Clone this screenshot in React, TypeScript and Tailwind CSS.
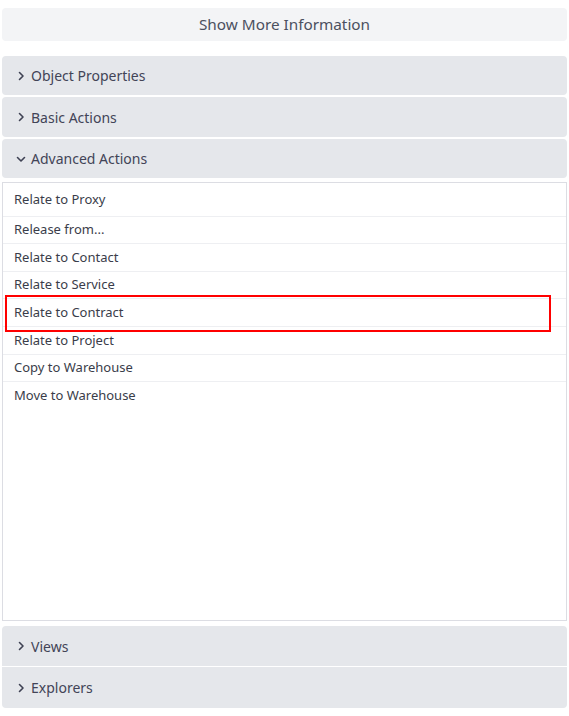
import React from "react";

const Chevron = ({ open }: { open?: boolean }) =>
  open ? (
    <svg width="12" height="12" viewBox="0 0 12 12" className="shrink-0">
      <path d="M2.5 4.5 L6 8 L9.5 4.5" fill="none" stroke="#3f4254" strokeWidth="1.6" strokeLinecap="round" strokeLinejoin="round" />
    </svg>
  ) : (
    <svg width="12" height="12" viewBox="0 0 12 12" className="shrink-0">
      <path d="M4.5 2.5 L8 6 L4.5 9.5" fill="none" stroke="#3f4254" strokeWidth="1.6" strokeLinecap="round" strokeLinejoin="round" />
    </svg>
  );

const Header = ({ label, open, className }: { label: string; open?: boolean; className: string }) => (
  <div className={`flex items-center gap-[4px] pl-[13px] bg-[#e5e7eb] text-[14px] text-[#424457] ${className}`}>
    <Chevron open={open} />
    <span>{label}</span>
  </div>
);

const items: [string, string, boolean][] = [
  ["Relate to Proxy", "h-[34px]", true],
  ["Release from...", "h-[27px]", true],
  ["Relate to Contact", "h-[28px]", true],
  ["Relate to Service", "h-[27px]", true],
  ["Relate to Contract", "h-[28px]", true],
  ["Relate to Project", "h-[28px]", true],
  ["Copy to Warehouse", "h-[27px]", true],
  ["Move to Warehouse", "h-[27px]", false],
];

export default function App() {
  return (
    <div className="w-[569px] h-[716px] bg-white px-[2px] pt-[8px]" style={{ fontFamily: '"Noto Sans", "Open Sans", sans-serif' }}>
      <div className="h-[33px] rounded-[4px] bg-[#f3f4f6] flex items-center justify-center text-[15.3px] text-[#4b5060]">
        Show More Information
      </div>
      <div className="mt-[15px] flex flex-col">
        <Header label="Object Properties" className="h-[39px] rounded-[4px]" />
        <Header label="Basic Actions" className="h-[40px] rounded-[4px] mt-[2px]" />
        <Header label="Advanced Actions" open className="h-[39px] rounded-[4px] mt-[2px]" />
        <div className="relative mt-[4px] h-[439px] border border-[#dcdde3] bg-white">
          {items.map(([label, h, sep]) => (
            <div
              key={label}
              className={`flex items-center pl-[11px] text-[13px] text-[#3a3d4a] ${h} ${sep ? "border-b border-[#eeeff2]" : ""}`}
            >
              {label}
            </div>
          ))}
          <div className="absolute left-[2px] top-[112px] w-[546px] h-[37px] border-2 border-[#ff0000]" />
        </div>
        <Header label="Views" className="h-[40px] rounded-t-[4px] mt-[5px]" />
        <Header label="Explorers" className="h-[41px] rounded-b-[4px] mt-[1px]" />
      </div>
    </div>
  );
}
